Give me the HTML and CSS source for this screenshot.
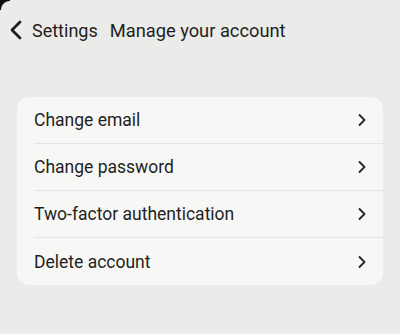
FILE: index.html
```html
<!DOCTYPE html>
<html lang="en">
    <head>
        <meta charset="UTF-8">
        <meta name="viewport" content="width=device-width, initial-scale=1.0">
        <title>Manage your account</title>
        <link rel="stylesheet" href="styles.css">
    </head>
    <body>
        <div class="screen-corner"></div>
        <header class="top-bar">
            <button class="back-btn" aria-label="Back">
                <svg width="16" height="20" viewBox="0 0 16 20">
                    <path d="M12 2 L4 10 L12 18" fill="none" stroke="#1f1f1f" stroke-width="2.8" stroke-linecap="round" stroke-linejoin="round"/>
                </svg>
            </button>
            <span class="back-label">Settings</span>
            <h1 class="page-title">Manage your account</h1>
        </header>

        <ul class="settings-list">
            <li class="settings-item">
                <span>Change email</span>
                <svg class="chevron" width="10" height="14" viewBox="0 0 10 14"><path d="M2.5 2 L7.5 7 L2.5 12" fill="none" stroke="#2a2a2a" stroke-width="1.9" stroke-linecap="round" stroke-linejoin="round"/></svg>
            </li>
            <li class="settings-item">
                <span>Change password</span>
                <svg class="chevron" width="10" height="14" viewBox="0 0 10 14"><path d="M2.5 2 L7.5 7 L2.5 12" fill="none" stroke="#2a2a2a" stroke-width="1.9" stroke-linecap="round" stroke-linejoin="round"/></svg>
            </li>
            <li class="settings-item">
                <span>Two-factor authentication</span>
                <svg class="chevron" width="10" height="14" viewBox="0 0 10 14"><path d="M2.5 2 L7.5 7 L2.5 12" fill="none" stroke="#2a2a2a" stroke-width="1.9" stroke-linecap="round" stroke-linejoin="round"/></svg>
            </li>
            <li class="settings-item">
                <span>Delete account</span>
                <svg class="chevron" width="10" height="14" viewBox="0 0 10 14"><path d="M2.5 2 L7.5 7 L2.5 12" fill="none" stroke="#2a2a2a" stroke-width="1.9" stroke-linecap="round" stroke-linejoin="round"/></svg>
            </li>
        </ul>
    </body>
</html>
```

FILE: styles.css
```css
/* Global styles */
* {
    margin: 0;
    padding: 0;
    box-sizing: border-box;
    font-family: Roboto, "Noto Sans", sans-serif;
}

body {
    background-color: #ebebe9;
    color: #1f1f1f;
    min-height: 100vh;
    padding: 0 17px;
}

/* dark rounded corner of the device screen */
.screen-corner {
    position: absolute;
    top: 0;
    left: 0;
    width: 10px;
    height: 10px;
    background: radial-gradient(circle at 10px 10px, transparent 8.5px, #111 9.5px);
}

.top-bar {
    display: flex;
    align-items: center;
    height: 60px;
    margin-left: -9px;
}

.back-btn {
    background: none;
    border: none;
    display: flex;
    align-items: center;
    width: 24px;
}

.back-label {
    font-size: 18px;
    margin-left: 0;
}

.page-title {
    font-size: 18.3px;
    font-weight: 400;
    margin-left: 12px;
}

.settings-list {
    list-style: none;
    margin-top: 37px;
    background: #f7f8f5;
    border-radius: 12px;
    padding-left: 17px;
}

.settings-item {
    display: flex;
    align-items: center;
    justify-content: space-between;
    height: 47px;
    padding-right: 16px;
    font-size: 17.5px;
    border-bottom: 1px solid #e4e5e2;
}

.settings-item:last-child {
    border-bottom: none;
}

.chevron {
    flex-shrink: 0;
}
```
